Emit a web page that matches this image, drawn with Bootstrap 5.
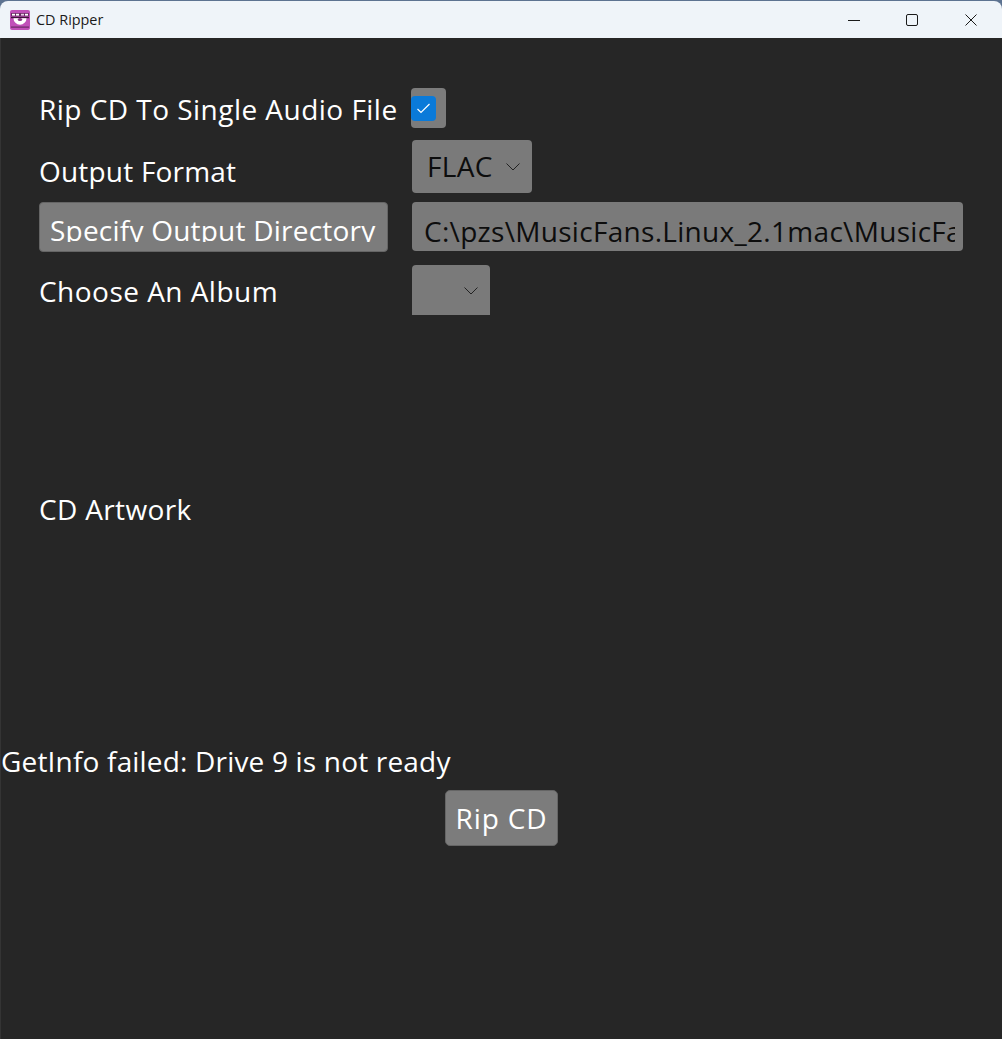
<!doctype html>
<html lang="en"><head><meta charset="utf-8">
<title>CD Ripper</title>
<link href="https://cdn.jsdelivr.net/npm/bootstrap@5.3.0/dist/css/bootstrap.min.css" rel="stylesheet">
<style>
html,body{height:100%;margin:0;background:#5d7391;overflow:hidden}
.win-frame{height:1039px;display:flex;flex-direction:column;padding-top:1px;font-family:"Open Sans","Noto Sans",sans-serif;color:#fff;letter-spacing:.35px}
.win-title{height:37px;flex:none;background:#eff4f9;color:#1a1a1a;border-radius:8px 8px 0 0;display:flex;align-items:center;padding-left:10px;letter-spacing:0}
.win-title-text{font-size:14.4px;margin-left:6px;font-family:"Open Sans",sans-serif}
.win-ctrl{margin-left:auto;display:flex;padding-right:2px}
.win-ctrl-btn{width:58.5px;height:37px;display:flex;align-items:center;justify-content:center}
.win-body{flex:1;background:#262626;padding:50px 39px 0 38px;border-left:1px solid #343434;position:relative}
.form-grid{display:grid;grid-template-columns:373px 1fr;font-size:28px;line-height:36px}
.lbl-row1{height:40px;display:flex;align-items:center;margin-bottom:12px;padding-top:1px;white-space:nowrap;letter-spacing:.47px}
.lbl-row2{height:53px;margin-bottom:9px;display:flex;align-items:center;padding-top:8px;letter-spacing:.2px}
.lbl-row4{height:50px;display:flex;align-items:center;padding-top:2px;letter-spacing:.47px}
.chk-wrap{width:35px;height:40px;margin-left:-1px;background:#7c7c7c;border-radius:4px;display:flex;align-items:center;margin-bottom:12px}
.chk-box{width:25px;height:25px;background:#0a7ad9;border-radius:4px;display:flex;align-items:center;justify-content:center}
.cmb{background:#7a7a7a;border-radius:4px;color:#0d0d0d;display:flex;align-items:center;position:relative}
.cmb-format{width:120px;height:53px;margin-bottom:9px;padding:0 0 2px 15px;font-size:28px}
.cmb-album{width:78px;height:50px;border-radius:4px 4px 0 0}
.cmb-arrow{position:absolute;top:50%;margin-top:-4px}
.cmb-album .cmb-arrow{margin-top:-3px}
.dir-btn{width:349px;height:50px;margin-bottom:13px;background:#7c7c7c;border:1px solid #656565;border-radius:4px;color:#fff;padding:0 0 0 10px;font-size:28px;overflow:hidden;text-align:left;line-height:54px;display:block;letter-spacing:.22px}
.dir-btn-clip{display:block;height:39px;overflow:hidden;white-space:nowrap}
.dir-input{width:551px;height:49px;background:#7a7a7a;border-radius:4px;color:#0d0d0d;padding:10px 8px 0 12px;font-size:28px;line-height:38px;overflow:hidden;white-space:nowrap;letter-spacing:.3px}
.dir-input-clip{display:block;overflow:hidden}
.artwork{font-size:28px;line-height:36px;margin-top:176px;padding-bottom:1px}
.status-line{font-size:28px;line-height:36px;margin:215px 0 0 -38px;white-space:nowrap;letter-spacing:.18px}
.rip-wrap{margin:11px -39px 0 -38px;display:flex;justify-content:center}
.rip-btn{width:113px;height:56px;background:#7c7c7c;border:1px solid #656565;border-radius:5px;color:#fff;font-size:28px;padding:0;letter-spacing:.85px}
</style></head>
<body>
<div class="win-frame">
  <div class="win-title">
    <svg width="20" height="20" viewBox="0 0 20 20"><rect width="20" height="20" rx="2" fill="#c04fb8"/><rect x="1" y="3" width="18" height="3.500" fill="#6b2a66"/><rect x="2" y="3.800" width="3" height="1.800" fill="#fff"/><rect x="6" y="3.800" width="3" height="1.800" fill="#fff"/><rect x="11" y="3.800" width="3" height="1.800" fill="#e8c8e6"/><rect x="15" y="3.800" width="3" height="1.800" fill="#fff"/><rect x="1" y="7" width="18" height="1.200" fill="#40123c"/><path d="M3.500 8.200h13a6.500 6.500 0 0 1-13 0z" fill="#fff"/><ellipse cx="10" cy="9.500" rx="2.200" ry="1.500" fill="#8a3584"/><rect x="1" y="16.500" width="18" height="1.200" fill="#6b2a66"/></svg>
    <span class="win-title-text">CD Ripper</span>
    <div class="win-ctrl">
      <div class="win-ctrl-btn"><svg width="12" height="12" viewBox="0 0 12 12"><path d="M0 6.500h12" stroke="#1a1a1a"/></svg></div>
      <div class="win-ctrl-btn"><svg width="12" height="12" viewBox="0 0 12 12"><rect x=".5" y=".5" width="11" height="11" rx="1.500" fill="none" stroke="#1a1a1a"/></svg></div>
      <div class="win-ctrl-btn"><svg width="12" height="12" viewBox="0 0 12 12"><path d="M.5.5l11 11M11.500.5l-11 11" stroke="#1a1a1a"/></svg></div>
    </div>
  </div>
  <div class="win-body">
    <div class="form-grid">
      <div class="lbl-row1">Rip CD To Single Audio File</div>
      <div><div class="chk-wrap"><div class="chk-box"><svg width="15" height="11" viewBox="0 0 15 11"><path d="M1.500 6l3.500 3.500 8.500-8.500" fill="none" stroke="#fff" stroke-width="1.200"/></svg></div></div></div>
      <div class="lbl-row2">Output Format</div>
      <div><div class="cmb cmb-format">FLAC<svg class="cmb-arrow" style="left:94px" width="14" height="8" viewBox="0 0 14 8"><path d="M.5.5L7 7l6.500-6.500" fill="none" stroke="#222" stroke-width="1"/></svg></div></div>
      <div><div class="dir-btn"><span class="dir-btn-clip">Specify Output Directory</span></div></div>
      <div><div class="dir-input"><span class="dir-input-clip">C:\pzs\MusicFans.Linux_2.1mac\MusicFans.Linux_2.1mac</span></div></div>
      <div class="lbl-row4">Choose An Album</div>
      <div><div class="cmb cmb-album"><svg class="cmb-arrow" style="left:52px" width="14" height="8" viewBox="0 0 14 8"><path d="M.5.5L7 7l6.500-6.500" fill="none" stroke="#222" stroke-width="1"/></svg></div></div>
    </div>
    <div class="artwork">CD Artwork</div>
    <div class="status-line">GetInfo failed: Drive 9 is not ready</div>
    <div class="rip-wrap"><button class="rip-btn" type="button">Rip CD</button></div>
  </div>
</div>
<script src="https://cdn.jsdelivr.net/npm/bootstrap@5.3.0/dist/js/bootstrap.bundle.min.js"></script>
</body></html>
